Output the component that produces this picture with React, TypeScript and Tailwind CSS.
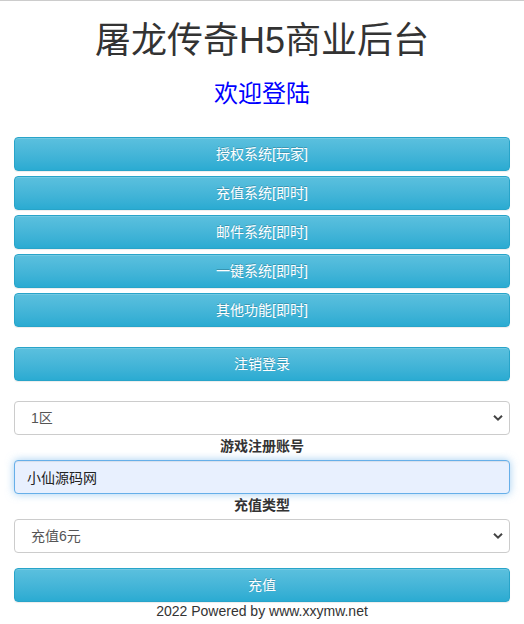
import { useState } from "react";

const menuItems = ["授权系统[玩家]", "充值系统[即时]", "邮件系统[即时]", "一键系统[即时]", "其他功能[即时]"];

const btnClass =
    "block w-full h-[34px] rounded-[4px] border border-[#28a4c9] bg-gradient-to-b from-[#5bc0de] to-[#2aabd2] text-white text-[14px] leading-[20px] [text-shadow:0_-1px_0_rgba(0,0,0,0.2)] shadow-[inset_0_1px_0_rgba(255,255,255,0.15),0_1px_1px_rgba(0,0,0,0.075)] cursor-pointer";

const Chevron = () => (
    <svg
        className="pointer-events-none absolute right-[7px] top-1/2 -translate-y-1/2"
        width="10"
        height="7"
        viewBox="0 0 10 7"
    >
        <path d="M1 1.2 L5 5.2 L9 1.2" fill="none" stroke="#444" strokeWidth="2" />
    </svg>
);

const SelectBox = ({ options, value, onChange }: { options: string[]; value: string; onChange: (v: string) => void }) => (
    <div className="relative">
        <select
            value={value}
            onChange={(e) => onChange(e.target.value)}
            className="block w-full h-[34px] appearance-none rounded-[4px] border border-[#ccc] bg-white pl-[16px] pr-8 text-[14px] text-[#555] outline-none"
        >
            {options.map((o) => (
                <option key={o} value={o}>{o}</option>
            ))}
        </select>
        <Chevron />
    </div>
);

export default function App() {
    const [zone, setZone] = useState("1区");
    const [account, setAccount] = useState("小仙源码网");
    const [amount, setAmount] = useState("充值6元");

    return (
        <div className="min-h-[624px] border-t border-[#ccc] bg-white font-['Liberation_Sans','Noto_Sans_CJK_SC',sans-serif] text-[#333]">
            <div className="px-[14px]">
                <h1 className="mt-[20px] text-center text-[36px] leading-[40px] font-normal">屠龙传奇H5商业后台</h1>
                <h2 className="mt-[20px] text-center text-[24px] leading-[26px] font-normal text-[#0000ff]">欢迎登陆</h2>

                <div className="mt-[30px] flex flex-col gap-[5px]">
                    {menuItems.map((item) => (
                        <button key={item} className={btnClass}>{item}</button>
                    ))}
                </div>

                <button className={`${btnClass} mt-[20px]`}>注销登录</button>

                <div className="mt-[20px]">
                    <SelectBox options={["1区", "2区", "3区"]} value={zone} onChange={setZone} />
                </div>
                <label className="block h-[25px] text-center text-[14px] leading-[22px] font-bold">游戏注册账号</label>
                <input
                    value={account}
                    onChange={(e) => setAccount(e.target.value)}
                    className="block w-full h-[34px] rounded-[4px] border border-[#66afe9] bg-[#e8f0fe] pl-[12px] text-[14px] text-[#222] outline-none shadow-[inset_0_1px_1px_rgba(0,0,0,0.075),0_0_8px_rgba(102,175,233,0.6)]"
                />
                <label className="block h-[25px] text-center text-[14px] leading-[22px] font-bold">充值类型</label>
                <SelectBox options={["充值6元", "充值30元", "充值68元", "充值128元"]} value={amount} onChange={setAmount} />

                <button className={`${btnClass} mt-[15px]`}>充值</button>
                <p className="text-center text-[14px] leading-[18px] text-[#333]">2022 Powered by www.xxymw.net</p>
            </div>
        </div>
    );
}
